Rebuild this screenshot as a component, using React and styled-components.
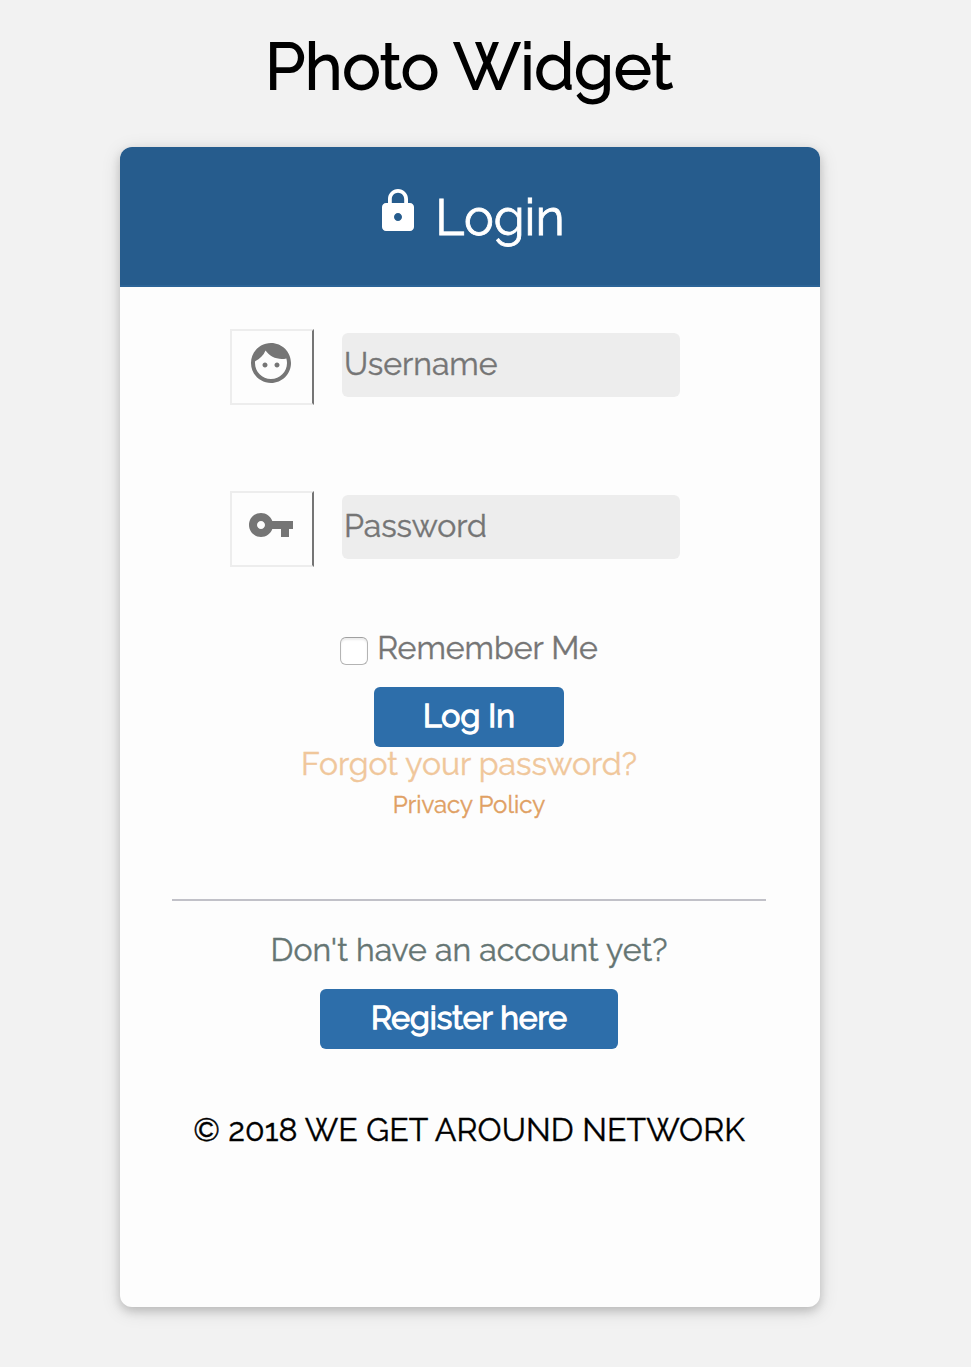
import React from "react";
import styled, { createGlobalStyle } from "styled-components";

const GlobalStyle = createGlobalStyle`
  * { box-sizing: border-box; }
  body {
    margin: 0;
    background: #f2f2f2;
    font-family: Raleway, Lato, sans-serif;
    font-size: 32px;
    line-height: 40px;
    color: #757575;
    -webkit-text-stroke: 0.4px currentColor;
  }
`;

const Page = styled.main`
  width: 940px;
  height: 1367px;
  padding-top: 27px;
  display: flex;
  flex-direction: column;
  align-items: center;
`;

const Title = styled.h1`
  margin: 0 2px 40px 0;
  font-size: 64px;
  line-height: 80px;
  font-weight: 400;
  color: #000;
  letter-spacing: 0.08px;
  -webkit-text-stroke: 1.8px #000;
`;

const Card = styled.section`
  width: 700px;
  height: 1160px;
  border-radius: 12px;
  background: #fdfdfd;
  box-shadow: 0 4px 10px rgba(0, 0, 0, 0.16), 0 4px 20px rgba(0, 0, 0, 0.12);
`;

const CardHeader = styled.header`
  width: 100%;
  height: 140px;
  border-bottom: 2px solid #2c6497;
  border-radius: 12px 12px 0 0;
  background: #265c8d;
  color: #fff;
  display: flex;
  justify-content: center;
  align-items: center;
  gap: 13px;
  padding-right: 1px;
`;

const Heading = styled.h2`
  margin: 4px 0 0;
  font-size: 50px;
  line-height: 60px;
  font-weight: 400;
  -webkit-text-stroke: 0.8px #fff;
`;

const Glyph = styled.svg`
  width: 48px;
  height: 48px;
  fill: currentColor;
  flex: none;
  margin-bottom: ${(p) => p.$lift || 0}px;
`;

const Body = styled.div`
  width: 698px;
  padding-top: 42px;
  display: flex;
  flex-direction: column;
  align-items: center;
`;

const Form = styled.form`
  width: 100%;
  margin: 0;
  display: flex;
  flex-direction: column;
  align-items: center;
`;

const Field = styled.label`
  width: 450px;
  height: 76px;
  margin-right: 28px;
  margin-bottom: ${(p) => p.$gap}px;
  display: flex;
  align-items: center;
  gap: 28px;
`;

const FieldIcon = styled.span`
  width: 84px;
  height: 76px;
  border: 2px solid #ededed;
  border-right-color: #757575;
  display: flex;
  justify-content: center;
  align-items: center;
  padding-right: 2px;
`;

const Input = styled.input`
  width: 338px;
  height: 64px;
  margin-bottom: 4px;
  padding: 0 2px 4px;
  border: 0;
  border-radius: 6px;
  background: #ededed;
  font: inherit;
  outline: none;
  &::placeholder { color: #757575; opacity: 1; -webkit-text-stroke: 0.4px #757575; }
`;

const Remember = styled.label`
  height: 40px;
  margin-top: -1px;
  margin-bottom: 19px;
  display: flex;
  align-items: center;
  gap: 9px;
`;

const Checkbox = styled.input`
  appearance: none;
  width: 28px;
  height: 28px;
  margin: 5px 0 0;
  border: 1px solid #b4b4b4;
  border-top-color: #a0a0a0;
  border-radius: 6px;
  background: #fff;
  box-shadow: inset 0 2px 2px rgba(0, 0, 0, 0.08);
`;

const Button = styled.button`
  width: ${(p) => p.$width}px;
  height: 60px;
  padding: 0 0 2px;
  border: 0;
  border-radius: 6px;
  background: #2d6eaa;
  color: #fff;
  font: inherit;
  -webkit-text-stroke: 1.4px #fff;
`;

const Link = styled.a`
  font-size: ${(p) => (p.$small ? 24 : 32)}px;
  line-height: ${(p) => (p.$small ? 48 : 34)}px;
  color: ${(p) => (p.$small ? "#e0a063" : "#f0c79b")};
`;

const Divider = styled.hr`
  width: 594px;
  height: 2px;
  margin: 70px 0 29px;
  border: 0;
  background: #c1c1c8;
`;

const Prompt = styled.p`
  margin: 0 0 19px;
  color: #657573;
`;

const Copyright = styled.p`
  margin: 61px 0 0;
  color: #000;
  letter-spacing: 0.12px;
`;

const LOCK = "M18 8h-1V6c0-2.76-2.24-5-5-5S7 3.24 7 6v2H6c-1.1 0-2 .9-2 2v10c0 1.1.9 2 2 2h12c1.1 0 2-.9 2-2V10c0-1.1-.9-2-2-2zm-6 9c-1.1 0-2-.9-2-2s.9-2 2-2 2 .9 2 2-.9 2-2 2zm3.1-9H8.9V6c0-1.71 1.39-3.1 3.1-3.1 1.71 0 3.1 1.39 3.1 3.1v2z";
const FACE = "M9 11.75c-.69 0-1.25.56-1.25 1.25s.56 1.25 1.25 1.25 1.25-.56 1.25-1.25-.56-1.25-1.25-1.25zm6 0c-.69 0-1.25.56-1.25 1.25s.56 1.25 1.25 1.25 1.25-.56 1.25-1.25-.56-1.25-1.25-1.25zM12 2C6.48 2 2 6.48 2 12s4.48 10 10 10 10-4.48 10-10S17.52 2 12 2zm0 18c-4.41 0-8-3.59-8-8 0-.29.02-.58.05-.86 2.36-1.05 4.23-2.98 5.21-5.37C11.07 8.33 14.05 10 17.42 10c.78 0 1.53-.09 2.25-.26.21.71.33 1.47.33 2.26 0 4.41-3.59 8-8 8z";
const KEY = "M12.65 10C11.83 7.67 9.61 6 7 6c-3.31 0-6 2.69-6 6s2.69 6 6 6c2.61 0 4.83-1.67 5.65-4H17v4h4v-4h2v-4H12.65zM7 14c-1.1 0-2-.9-2-2s.9-2 2-2 2 .9 2 2-.9 2-2 2z";

const Icon = ({ d, lift }) => (
  <Glyph viewBox="0 0 24 24" $lift={lift} aria-hidden="true">
    <path d={d} />
  </Glyph>
);

export default function App() {
  return (
    <>
      <GlobalStyle />
      <Page>
        <Title>Photo Widget</Title>
        <Card>
          <CardHeader>
            <Icon d={LOCK} lift={10} />
            <Heading>Login</Heading>
          </CardHeader>
          <Body>
            <Form>
              <Field $gap={86}>
                <FieldIcon><Icon d={FACE} lift={8} /></FieldIcon>
                <Input type="text" placeholder="Username" />
              </Field>
              <Field $gap={62}>
                <FieldIcon><Icon d={KEY} lift={8} /></FieldIcon>
                <Input type="password" placeholder="Password" />
              </Field>
              <Remember>
                <Checkbox type="checkbox" />
                Remember Me
              </Remember>
              <Button type="button" $width={190}>Log In</Button>
              <Link>Forgot your password?</Link>
              <Link $small>Privacy Policy</Link>
            </Form>
            <Divider />
            <Prompt>Don't have an account yet?</Prompt>
            <Button type="button" $width={298}>Register here</Button>
            <Copyright>© 2018 WE GET AROUND NETWORK</Copyright>
          </Body>
        </Card>
      </Page>
    </>
  );
}
